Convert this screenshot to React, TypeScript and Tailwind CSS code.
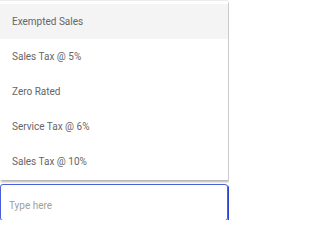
import React from "react";

const items = [
  "Exempted Sales",
  "Sales Tax @ 5%",
  "Zero Rated",
  "Service Tax @ 6%",
  "Sales Tax @ 10%",
];

export default function App() {
  return (
    <div
      className="w-[229px] h-[220px] bg-white overflow-hidden"
      style={{ fontFamily: "Roboto, 'Liberation Sans', sans-serif" }}
    >
      <div className="w-[228px] pt-[3px] pb-[1px] bg-white border-t border-[#ececec] shadow-[1px_2px_2px_rgba(0,0,0,0.3)]">
        {items.map((t, i) => (
          <div
            key={t}
            className={`h-[35px] flex items-center px-3 text-[10px] text-[#666666] ${
              i === 0 ? "bg-[#f4f4f4]" : ""
            }`}
          >
            {t}
          </div>
        ))}
      </div>
      <div className="mt-[4px] w-[228px] h-[37px] rounded-[3px] border border-[#4a5fd8] shadow-[1px_1px_0_#2a44d0] flex items-center pl-[8px] pt-[6px]">
        <input
          autoFocus
          placeholder="Type here"
          className="w-full outline-none bg-transparent text-[10px] text-[#444] placeholder:text-[#a0a0a0] caret-[#2a44d0]"
          style={{ fontFamily: "Roboto, 'Liberation Sans', sans-serif" }}
        />
      </div>
    </div>
  );
}
